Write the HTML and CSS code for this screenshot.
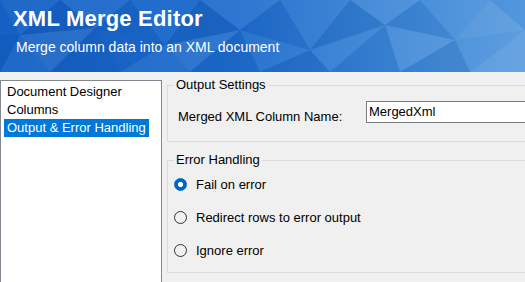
FILE: index.html
```html
<!DOCTYPE html>
<html lang="en">
<head>
  <meta charset="UTF-8">
  <title>XML Merge Editor</title>
  <link rel="stylesheet" href="styles.css">
</head>
<body>
  <header class="banner">
    <!-- low-poly backdrop -->
    <svg class="banner-art" width="525" height="72" viewBox="0 0 525 72" preserveAspectRatio="none">
      <polygon points="0,0 60,0 20,35" fill="#fff" fill-opacity="0.05"/>
      <polygon points="60,0 95,28 20,35" fill="#001a55" fill-opacity="0.08"/>
      <polygon points="60,0 130,0 95,28" fill="#fff" fill-opacity="0.07"/>
      <polygon points="130,0 165,45 95,28" fill="#001a55" fill-opacity="0.06"/>
      <polygon points="130,0 200,0 165,45" fill="#fff" fill-opacity="0.04"/>
      <polygon points="200,0 240,30 165,45" fill="#001a55" fill-opacity="0.1"/>
      <polygon points="200,0 280,0 240,30" fill="#fff" fill-opacity="0.08"/>
      <polygon points="280,0 310,50 240,30" fill="#001a55" fill-opacity="0.05"/>
      <polygon points="280,0 350,0 310,50" fill="#fff" fill-opacity="0.06"/>
      <polygon points="350,0 385,25 310,50" fill="#001a55" fill-opacity="0.08"/>
      <polygon points="350,0 420,0 385,25" fill="#fff" fill-opacity="0.1"/>
      <polygon points="420,0 455,40 385,25" fill="#001a55" fill-opacity="0.05"/>
      <polygon points="420,0 490,0 455,40" fill="#fff" fill-opacity="0.06"/>
      <polygon points="490,0 525,30 455,40" fill="#fff" fill-opacity="0.1"/>
      <polygon points="0,35 20,35 0,72" fill="#001a55" fill-opacity="0.06"/>
      <polygon points="20,35 50,72 0,72" fill="#fff" fill-opacity="0.05"/>
      <polygon points="20,35 95,28 50,72" fill="#fff" fill-opacity="0.08"/>
      <polygon points="95,28 120,72 50,72" fill="#001a55" fill-opacity="0.07"/>
      <polygon points="95,28 165,45 120,72" fill="#001a55" fill-opacity="0.04"/>
      <polygon points="165,45 190,72 120,72" fill="#fff" fill-opacity="0.06"/>
      <polygon points="165,45 240,30 190,72" fill="#fff" fill-opacity="0.09"/>
      <polygon points="240,30 260,72 190,72" fill="#001a55" fill-opacity="0.06"/>
      <polygon points="240,30 310,50 260,72" fill="#fff" fill-opacity="0.05"/>
      <polygon points="310,50 330,72 260,72" fill="#001a55" fill-opacity="0.09"/>
      <polygon points="310,50 385,25 330,72" fill="#fff" fill-opacity="0.07"/>
      <polygon points="385,25 400,72 330,72" fill="#001a55" fill-opacity="0.05"/>
      <polygon points="385,25 455,40 400,72" fill="#fff" fill-opacity="0.1"/>
      <polygon points="455,40 470,72 400,72" fill="#001a55" fill-opacity="0.07"/>
      <polygon points="455,40 525,30 470,72" fill="#fff" fill-opacity="0.06"/>
      <polygon points="525,30 525,72 470,72" fill="#fff" fill-opacity="0.12"/>
    </svg>
    <h1 class="banner-title">XML Merge Editor</h1>
    <p class="banner-sub">Merge column data into an XML document</p>
  </header>

  <main class="editor">
    <ul class="nav-list">
      <li class="nav-item"><span>Document Designer</span></li>
      <li class="nav-item"><span>Columns</span></li>
      <li class="nav-item"><span class="selected">Output &amp; Error Handling</span></li>
    </ul>

    <div class="pane">
      <fieldset class="group group-output">
        <legend>Output Settings</legend>
        <div class="field-row">
          <label for="colName">Merged XML Column Name:</label>
          <input type="text" id="colName" value="MergedXml">
        </div>
      </fieldset>

      <fieldset class="group group-errors">
        <legend>Error Handling</legend>
        <label class="radio"><span class="radio-dot checked"></span>Fail on error</label>
        <label class="radio"><span class="radio-dot"></span>Redirect rows to error output</label>
        <label class="radio"><span class="radio-dot"></span>Ignore error</label>
      </fieldset>
    </div>
  </main>
</body>
</html>
```

FILE: styles.css
```css
* {
  box-sizing: border-box;
}

body {
  margin: 0;
  width: 525px;
  height: 282px;
  overflow: hidden;
  background: #f0f0f0;
  color: #000;
  font-family: "Liberation Sans", Arial, sans-serif;
  font-size: 13px;
}

/* Banner */
.banner {
  position: relative;
  height: 72px;
  padding: 6px 0 0 13px;
  background: linear-gradient(90deg, #1460c4 0%, #1d6bcc 45%, #3a85d6 75%, #5398dd 100%);
  color: #fff;
  overflow: hidden;
}

.banner-art {
  position: absolute;
  top: 0;
  left: 0;
}

.banner-title {
  position: relative;
  margin: 0;
  font-size: 22px;
  line-height: 26px;
  font-weight: bold;
  letter-spacing: 0.2px;
}

.banner-sub {
  position: relative;
  margin: 6px 0 0 3px;
  font-size: 14px;
  line-height: 18px;
}

/* Main area */
.editor {
  display: flex;
  align-items: flex-start;
  height: 205px;
  margin-top: 5px;
  overflow: hidden;
}

.nav-list {
  list-style: none;
  margin: 3px 0 0;
  padding: 2px 0 0;
  width: 162px;
  height: 202px;
  flex-shrink: 0;
  background: #fff;
  border: 1px solid #828790;
  border-bottom: none;
}

.nav-item {
  height: 18px;
  line-height: 18px;
}

.nav-item span {
  display: inline-block;
  margin-left: 3px;
  padding: 0 3px;
}

.nav-item .selected {
  background: #0078d7;
  color: #fff;
}

.pane {
  width: 358px;
  margin-left: 5px;
  flex-shrink: 0;
  overflow: hidden;
}

/* Group boxes */
.group {
  margin: 0;
  padding: 0;
  width: 362px;
  min-width: 0;
  border: 1px solid #dcdcdc;
}

.group legend {
  margin-left: 6px;
  padding: 0 2px;
  line-height: 16px;
}

.field-row {
  display: flex;
  align-items: flex-start;
  padding: 8px 0 16px 10px;
}

.field-row label {
  flex-shrink: 0;
  width: 188px;
  margin-top: 8px;
  line-height: 16px;
}

.field-row input {
  flex-shrink: 0;
  width: 170px;
  height: 22px;
  margin: 0;
  padding: 0 2px 2px;
  border: 1px solid #7a7a7a;
  border-radius: 0;
  background: #fff;
  font-family: inherit;
  font-size: 13px;
  color: #000;
  outline: none;
}

.group-errors {
  margin-top: 10px;
  padding: 0 0 5px;
}

.radio {
  display: flex;
  align-items: center;
  height: 33px;
  padding-left: 6px;
}

.radio-dot {
  width: 13px;
  height: 13px;
  margin-right: 9px;
  border: 1px solid #333;
  border-radius: 50%;
}

.radio-dot.checked {
  border-color: #0067c0;
  background: radial-gradient(circle, #fff 0 2.4px, #0067c0 2.9px);
}
```
